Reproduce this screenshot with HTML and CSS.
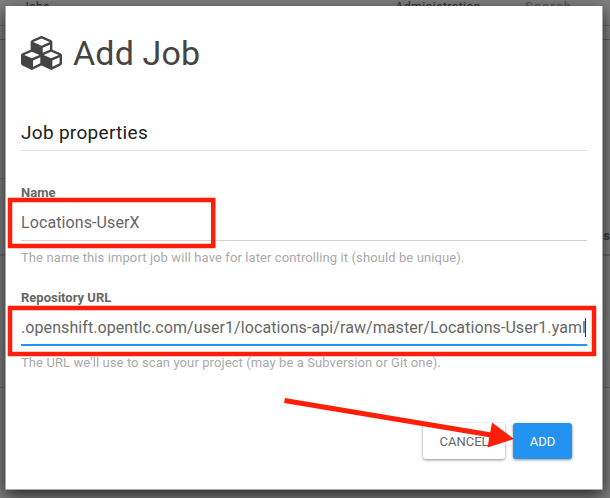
FILE: index.html
```html
<!DOCTYPE html>
<html lang="en">
<head>
<meta charset="utf-8">
<title>Add Job</title>
<link rel="stylesheet" href="styles.css">
</head>
<body>
<div class="page">
  <nav class="nav"><span>Jobs</span><span class="admin">Administration</span><span class="search">Search</span></nav>
  <div class="subnav"></div>
  <div class="table-head"><hr class="rule"><span>Actions</span></div>
  <div class="table-row"></div>
</div>
<main class="modal">
  <h1 class="title">
    <svg class="cubes" viewBox="0 0 2176 1792"><path d="M640 1632l384-192v-314l-384 164v342zm-64-454l404-173-404-173-404 173zm1088 454l384-192v-314l-384 164v342zm-64-454l404-173-404-173-404 173zm-448-293l384-165v-266l-384 164v267zm-64-379l441-189-441-189-441 189zm1088 518v416q0 36-19 67t-52 47l-448 224q-25 14-57 14t-57-14l-448-224q-4-2-7-4-2 2-7 4l-448 224q-25 14-57 14t-57-14l-448-224q-33-16-52-47t-19-67v-416q0-38 21.500-70t56.500-48l434-186v-400q0-38 21.500-70t56.500-48l448-192q23-10 50-10t50 10l448 192q35 16 56.500 48t21.500 70v400l434 186q36 16 57 48t21 70z"/></svg>
    <span>Add Job</span>
  </h1>
  <h2 class="section">Job properties</h2>
  <div class="field">
    <div class="label">Name</div>
    <div class="input"><span class="name-value">Locations-UserX</span></div>
    <div class="help">The name this import job will have for later controlling it (should be unique).</div>
  </div>
  <div class="field">
    <div class="label">Repository URL</div>
    <div class="input focused"><span class="url-value">.openshift.opentlc.com/user1/locations-api/raw/master/Locations-User1.yaml</span><i class="caret"></i></div>
    <div class="help">The URL we'll use to scan your project (may be a Subversion or Git one).</div>
  </div>
  <div class="actions">
    <div class="button cancel">CANCEL</div>
    <div class="button add">ADD</div>
  </div>
</main>
<svg class="marks" viewBox="0 0 610 498">
  <rect class="box" x="10" y="200" width="203.200" height="46"/>
  <rect class="box" x="10" y="308" width="584" height="46"/>
  <path class="shaft" d="M284.500 400.500L491 435"/>
  <path class="head" d="M492 422.500L514 439L487.500 447.500Z"/>
</svg>
</body>
</html>
```

FILE: styles.css
```css
* { box-sizing: border-box; }
html, body { width: 610px; height: 498px; margin: 0; overflow: hidden; }
body { position: relative; background: #7f7f7f; font-family: Roboto, sans-serif; color: #666; }
.page { height: 498px; }
.nav { display: flex; height: 26px; border-bottom: 1px solid #6b6b6b; padding-left: 22px; font-size: 12px; line-height: 14px; letter-spacing: .3px; color: #333; }
.admin { margin-left: 346px; letter-spacing: .5px; }
.search { margin-left: 44px; font-size: 13px; letter-spacing: 1.2px; color: #555; }
.subnav { height: 14px; border-bottom: 1px solid #626262; }
.table-head { height: 216px; padding-top: 138px; border-bottom: 2px solid #686868; text-align: right; font-size: 13px; font-weight: 700; line-height: 14px; color: #333; }
.rule { width: 20px; height: 1px; margin: 0 0 50px; border: 0; background: #6b6b6b; }
.table-row { height: 132px; border-bottom: 1px solid #686868; }
.modal { position: absolute; left: 5px; top: 6px; width: 598px; height: 484px; padding: 27px 15px 0; background: #fff; border: 1px solid #aaa; border-width: 0 1px 1px; box-shadow: 0 5px 15px rgba(0,0,0,.7); }
.title { display: flex; align-items: center; height: 40px; margin: 0; color: #444; font-size: 34px; font-weight: 400; line-height: 40px; gap: 11px; letter-spacing: .15px; }
.cubes { width: 41px; height: 34px; fill: #444; }
.section { display: flex; align-items: flex-end; width: 566px; height: 55px; margin: 23px 0 34px; padding-bottom: 6px; color: #212121; font-size: 19px; font-weight: 400; line-height: 22px; letter-spacing: .3px; border-bottom: 1px solid #e0e0e0; }
.field { height: 105px; width: 566px; }
.label { height: 16px; font-size: 13px; font-weight: 700; line-height: 16px; }
.input { display: flex; height: 40px; align-items: center; padding-top: 4px; border-bottom: 1px solid #d4d4d4; font-size: 16px; line-height: 20px; white-space: nowrap; }
.focused { padding-top: 5px; border-bottom: 2px solid #2196f3; }
.caret { flex: none; width: 1px; height: 19px; margin-left: -1px; background: #333; }
.help { height: 30px; padding-top: 9px; font-size: 13px; line-height: 16px; letter-spacing: .1px; color: #aaa; white-space: nowrap; }
.name-value { letter-spacing: .1px; }
.url-value { letter-spacing: .08px; }
.actions { display: flex; justify-content: flex-end; gap: 8px; margin: 28px 15px 0 0; }
.button { height: 36px; border-radius: 3px; font-size: 13px; line-height: 37px; text-align: center; box-shadow: 0 1px 3px rgba(0,0,0,.45); }
.cancel { width: 82px; background: #fff; }
.add { width: 59px; background: #2492f0; color: #fff; }
.marks { position: absolute; left: 0; top: 0; width: 610px; height: 498px; }
.box { fill: none; stroke: #ff1e09; stroke-width: 4.500; }
.shaft { fill: none; stroke: #ff1e09; stroke-width: 5; }
.head { fill: #ff1e09; }
```
